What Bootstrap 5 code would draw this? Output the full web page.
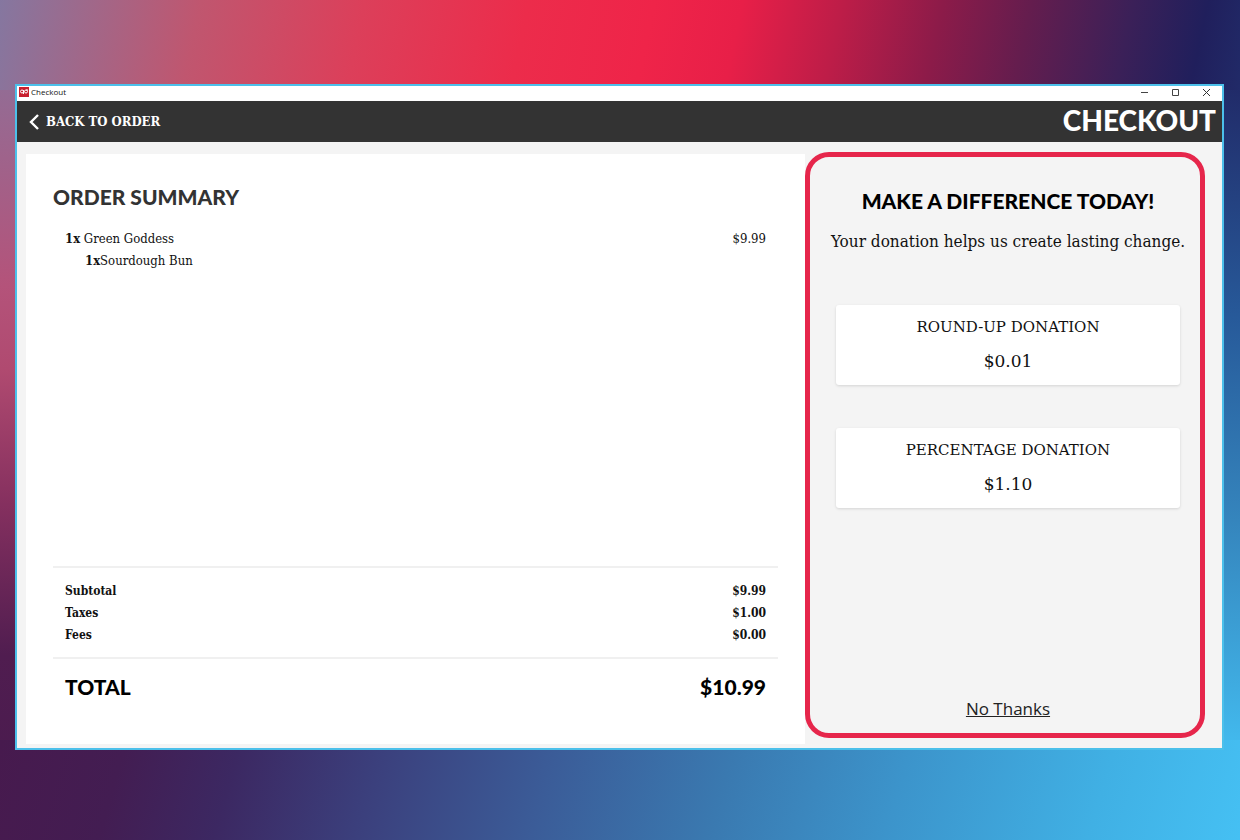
<!DOCTYPE html>
<html lang="en">
<head>
<meta charset="utf-8">
<meta name="viewport" content="width=device-width, initial-scale=1">
<title>Checkout</title>
<link href="https://cdn.jsdelivr.net/npm/bootstrap@5.3.0/dist/css/bootstrap.min.css" rel="stylesheet">
<style>
  :root {
    --slab: "DejaVu Serif Condensed", "DejaVu Serif", serif;
    --slab-wide: "DejaVu Serif", serif;
    --display: Lato, "Open Sans", sans-serif;
  }
  body {
    font: 13px/22px var(--slab);
    color: #111;
    padding: 84px 16px 90px 15px;
    background:
      linear-gradient(102deg, #8577a0 0%, #c0566f 16%, #dc3f5a 29%, #ec2c4b 42%, #ef2449 52%, #e81f48 59%, #bd1d48 67%, #8c1b49 75%, #641d4e 82%, #3b2058 90%, #201f5c 96%, #212a68 100%) top / 100% 90px no-repeat,
      linear-gradient(106deg, #471a4e 0%, #431d52 10%, #3c2862 19%, #3b3f7c 30%, #3b5c98 44%, #3a79b0 58%, #3c94cb 72%, #40b0e4 88%, #45c0f3 100%) bottom / 100% 100px no-repeat,
      linear-gradient(#8577a0 0%, #b4537a 34%, #b04a70 44%, #85305f 60%, #501d50 78%, #471a4e 100%) left / 50% 100% no-repeat,
      linear-gradient(#1c1e5c 0%, #212a68 10%, #275a9a 38%, #3585bd 62%, #42b8ec 88%, #45c0f3 100%) right / 50% 100% no-repeat;
  }
  .app-window { border: 2px solid #4cc0ea; background: #f4f4f4; }
  .title-bar { height: 15px; font: 8px/12px "Open Sans", sans-serif; background: #fff; padding: 0 10px 3px 2px; }
  .app-name { gap: 2px; }
  .window-controls { gap: 20px; }
  .window-controls button { width: 11px; height: 11px; background: none; border: 0; padding: 0; display: flex; }
  .app-header { background: #333; height: 41px; padding: 0 6px 0 12px; }
  .back-link { color: #fff; font-weight: 700; gap: 7px; }
  .page-name { font: 900 28px/38px var(--display); color: #fff; padding-bottom: 3px; }
  .order-panel { background: #fff; margin: 12px 0 4px 9px; padding: 29px 27px 43px 27px; }
  .section-title { font: 900 21px/28px var(--display); }
  .order-panel .section-title { color: #333; }
  .order-lines { padding: 0 12px; margin-top: 17px; }
  .order-extra { padding-left: 20px; }
  .sums { border-top: 2px solid #f0f0f0; border-bottom: 2px solid #f0f0f0; padding: 12px 12px 11px; }
  .sums table { line-height: 22px; font-size: 12px; }
  .grand-total { font: 900 21px/28px var(--display); padding: 14px 12px 0; color: #000; }
  .donation-panel { width: 400px; margin: 10px 17px 10px 0; border: 5px solid #e6264b; border-radius: 24px; padding: 30px 15px 12px 21px; }
  .donation-panel .section-title { color: #000; margin-bottom: 14px; }
  .donation-copy { font-size: 17px; line-height: 24px; margin-bottom: 52px; }
  .donation-options { gap: 43px; padding: 0 5px; }
  .donation-option { height: 80px; background: #fff; border: 0; border-radius: 3px; box-shadow: 0 1px 3px #0002; font: 15px/34px var(--slab-wide); color: #111; padding: 0 0 2px; }
  .donation-amount { font-size: 17px; }
  .skip-link { font: 17px/24px "Open Sans", sans-serif; color: #222; }
</style>
</head>
<body class="min-vh-100 d-flex flex-column">
<main class="app-window d-flex flex-column flex-grow-1">
  <div class="title-bar d-flex align-items-center justify-content-between">
    <div class="app-name d-flex align-items-center">
      <svg width="10" height="10" viewBox="0 0 20 20" aria-hidden="true">
        <rect width="20" height="20" fill="#c8202f"/>
        <g fill="none" stroke="#fff" stroke-width="2"><circle cx="6" cy="9" r="3"/><path d="M9 6v8"/><circle cx="14" cy="9" r="3"/><path d="M14 6h4"/></g>
      </svg>
      <span>Checkout</span>
    </div>
    <div class="window-controls d-flex">
      <button type="button" aria-label="Minimize"><svg width="11" height="11" stroke="#444" fill="none"><path d="M2 5.500h7"/></svg></button>
      <button type="button" aria-label="Maximize"><svg width="11" height="11" stroke="#444" fill="none"><path d="M2.500 2.500h6v6h-6z"/></svg></button>
      <button type="button" aria-label="Close"><svg width="11" height="11" stroke="#333" fill="none"><path d="M2 2l7 7M9 2l-7 7"/></svg></button>
    </div>
  </div>
  <header class="app-header d-flex align-items-center justify-content-between">
    <a href="#" class="back-link d-flex align-items-center text-decoration-none">
      <svg width="10" height="16" viewBox="0 0 10 16" fill="none" stroke="#fff" stroke-width="2.400" aria-hidden="true"><path d="M9 1L2 8l7 7"/></svg>
      <span>BACK TO ORDER</span>
    </a>
    <h1 class="page-name m-0">CHECKOUT</h1>
  </header>
  <div class="d-flex flex-grow-1">
    <section class="order-panel d-flex flex-column flex-grow-1">
      <h2 class="section-title m-0">ORDER SUMMARY</h2>
      <ul class="order-lines list-unstyled flex-grow-1 mb-0">
        <li>
          <div class="d-flex justify-content-between"><span><b>1x</b> Green Goddess</span><span>$9.99</span></div>
          <div class="order-extra"><b>1x</b>Sourdough Bun</div>
        </li>
      </ul>
      <div class="sums">
        <table class="w-100">
          <tbody>
            <tr><th scope="row" class="p-0">Subtotal</th><td class="p-0 text-end fw-bold">$9.99</td></tr>
            <tr><th scope="row" class="p-0">Taxes</th><td class="p-0 text-end fw-bold">$1.00</td></tr>
            <tr><th scope="row" class="p-0">Fees</th><td class="p-0 text-end fw-bold">$0.00</td></tr>
          </tbody>
        </table>
      </div>
      <div class="grand-total d-flex justify-content-between"><span>TOTAL</span><span>$10.99</span></div>
    </section>
    <section class="donation-panel d-flex flex-column flex-shrink-0 text-center">
      <h2 class="section-title mt-0">MAKE A DIFFERENCE TODAY!</h2>
      <p class="donation-copy text-nowrap">Your donation helps us create lasting change.</p>
      <div class="donation-options d-flex flex-column flex-grow-1">
        <button type="button" class="donation-option d-flex flex-column align-items-center justify-content-center"><span>ROUND-UP DONATION</span><span class="donation-amount">$0.01</span></button>
        <button type="button" class="donation-option d-flex flex-column align-items-center justify-content-center"><span>PERCENTAGE DONATION</span><span class="donation-amount">$1.10</span></button>
      </div>
      <a href="#" class="skip-link align-self-center">No Thanks</a>
    </section>
  </div>
</main>
<script src="https://cdn.jsdelivr.net/npm/bootstrap@5.3.0/dist/js/bootstrap.bundle.min.js"></script>
</body>
</html>
